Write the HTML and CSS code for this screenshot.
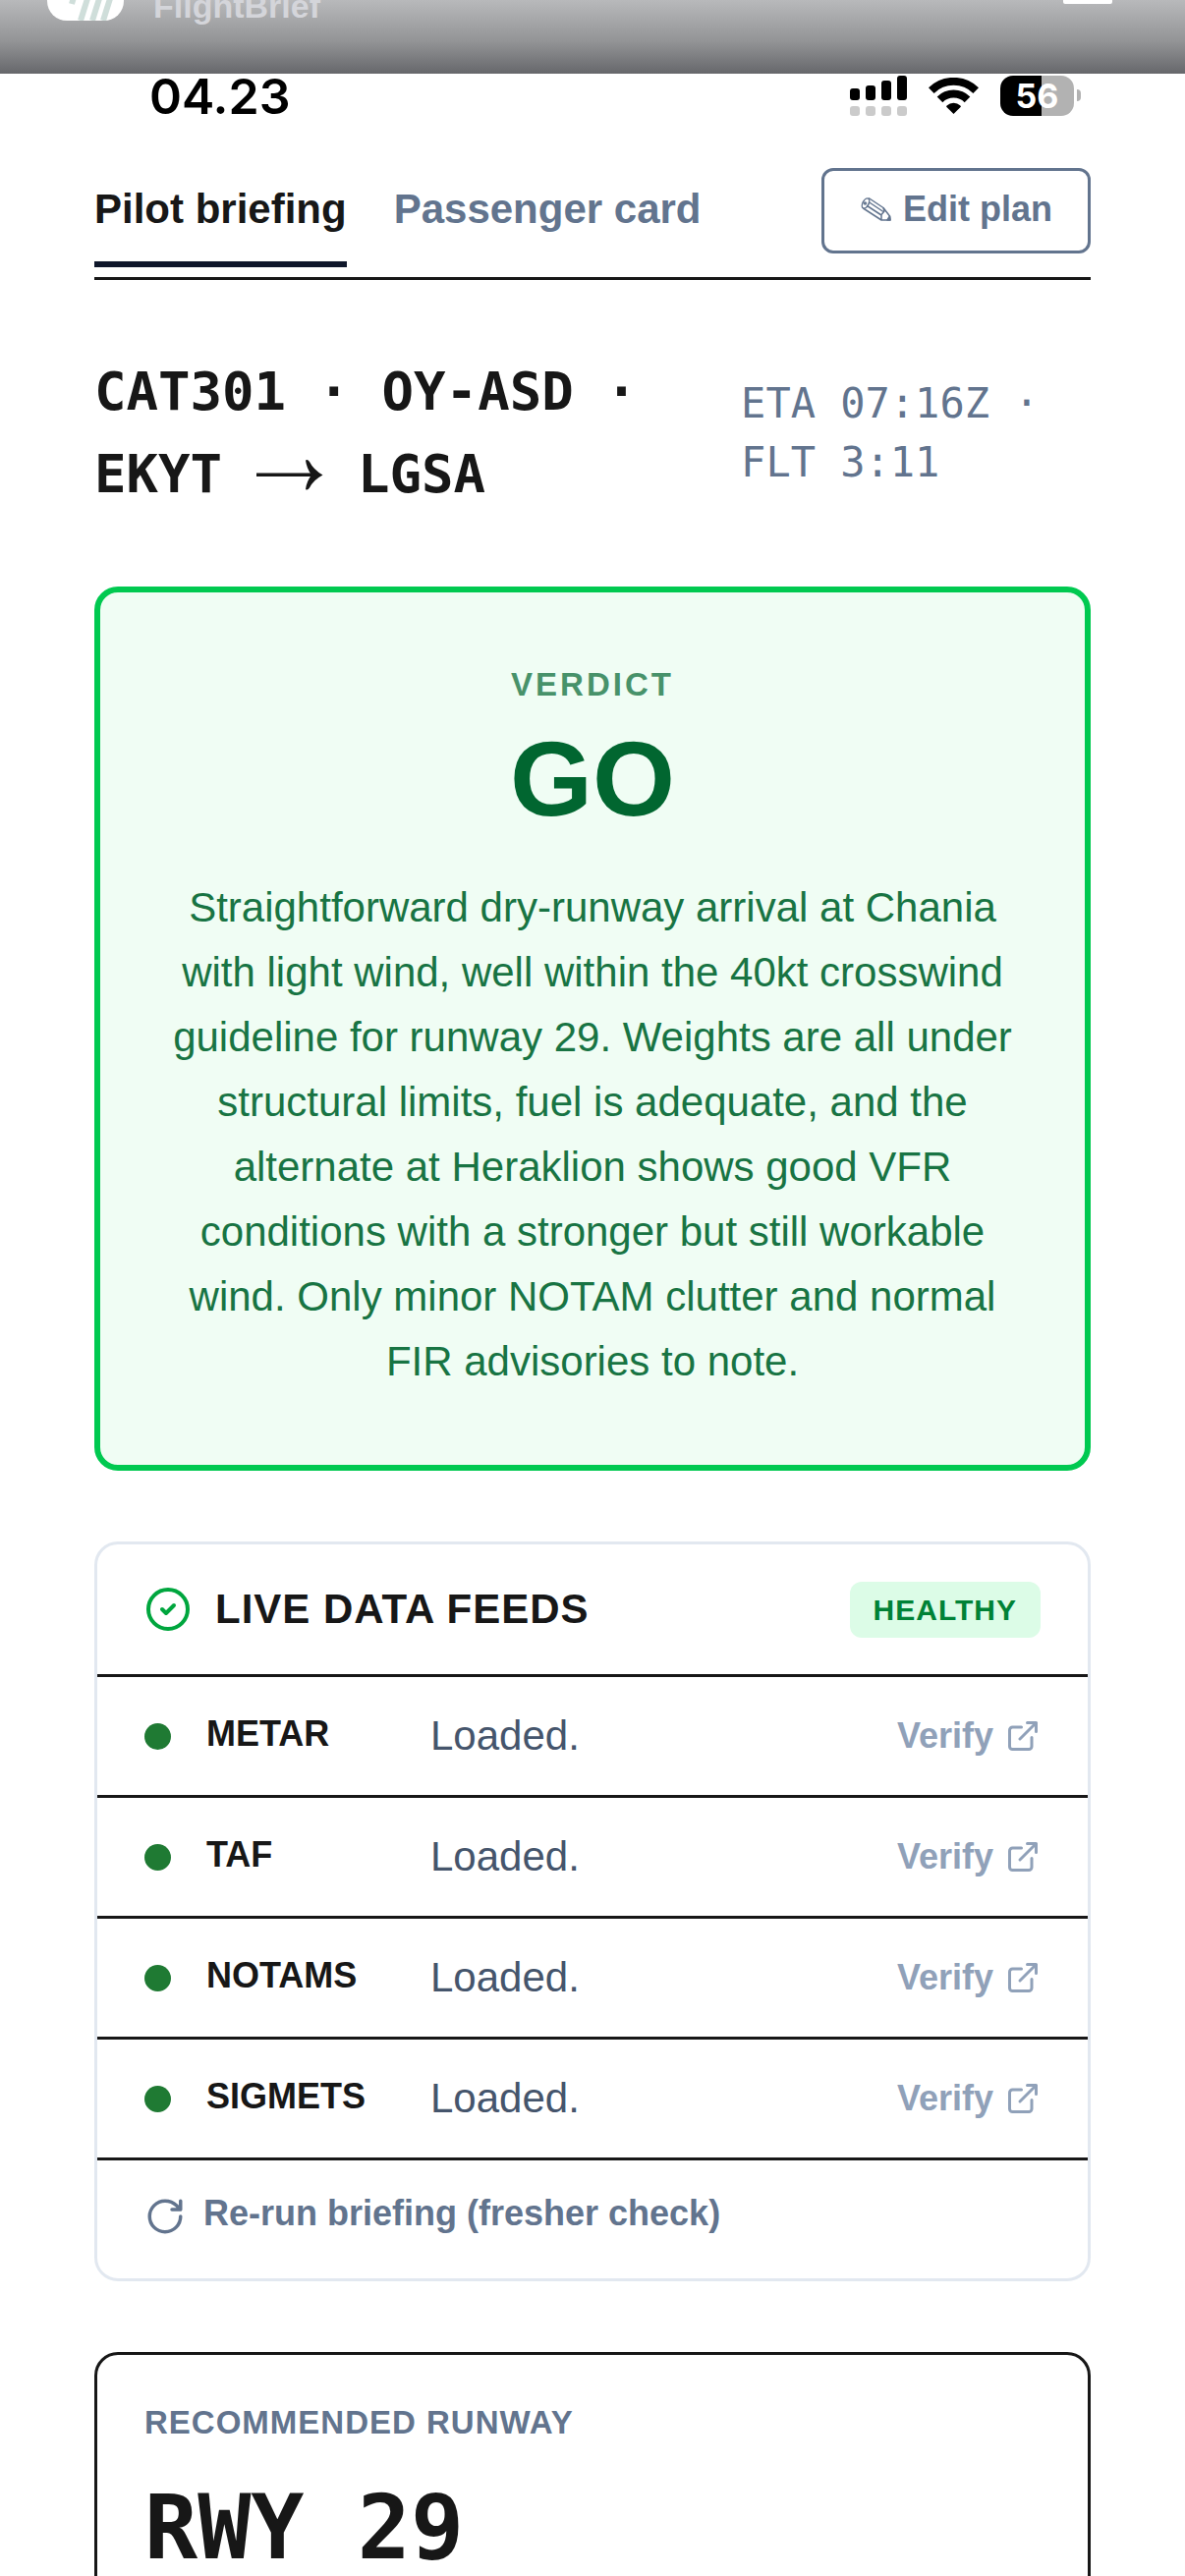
FILE: index.html
```html
<!DOCTYPE html>
<html lang="en">
<head>
<meta charset="utf-8">
<meta name="viewport" content="width=device-width, initial-scale=1">
<title>FlightBrief</title>
<link rel="stylesheet" href="styles.css">
</head>
<body>
<header class="app-bar">
  <svg class="logo" viewBox="0 0 78 78" aria-hidden="true">
    <rect width="78" height="78" rx="20" fill="#fff"/>
    <g fill="none" stroke="#cfdeda" stroke-width="6">
      <path d="M30 44 L25 61"/>
      <path d="M49 30 L34 78"/>
      <path d="M61 30 L46 78"/>
      <path d="M72 30 L57 78"/>
    </g>
  </svg>
  <span class="brand">FlightBrief</span>
  <button class="menu" aria-label="Menu"></button>
</header>
<div class="status">
  <span class="clock">04.23</span>
  <svg class="signal" viewBox="0 0 58 41" aria-hidden="true">
    <rect x="0" y="13" width="10" height="12" rx="3"/>
    <rect x="16" y="10" width="10" height="15" rx="3"/>
    <rect x="32" y="5" width="10" height="20" rx="3"/>
    <rect x="48" y="0" width="10" height="25" rx="3"/>
    <g fill="#cbcbcb">
      <rect x="0" y="31" width="10" height="10" rx="3"/>
      <rect x="16" y="31" width="10" height="10" rx="3"/>
      <rect x="32" y="31" width="10" height="10" rx="3"/>
      <rect x="48" y="31" width="10" height="10" rx="3"/>
    </g>
  </svg>
  <svg class="wifi" viewBox="0 0 51 37" aria-hidden="true">
    <g fill="none" stroke="#000" stroke-width="8">
      <path d="M2.800 13.100 A32.500 32.500 0 0 1 48.200 13.100"/>
      <path d="M11.500 22.300 A19.800 19.800 0 0 1 39.500 22.300"/>
    </g>
    <path d="M25.500 37 L18.200 29.700 Q18 29 18.600 28.400 A10.500 10.500 0 0 1 32.400 28.400 Q33 29 32.800 29.700 Z"/>
  </svg>
  <div class="battery"><span class="level">56</span></div>
</div>
<main class="page">
  <nav class="tabs">
    <a class="tab tab-active" href="#pilot">Pilot briefing</a>
    <a class="tab" href="#passenger">Passenger card</a>
    <button class="edit">
      <svg class="pencil" viewBox="0 0 34 30" aria-hidden="true">
        <g fill="none" stroke="currentColor" stroke-width="1.500" stroke-linejoin="round">
          <ellipse cx="6" cy="9" rx="3" ry="5.500" transform="rotate(28 6 9)"/>
          <circle cx="5.500" cy="9" r="1"/>
          <path d="M9 3.500 L24 13.500 L30.500 22 L31 26 L22 26 L3.500 14"/>
          <path d="M9 7.500 L24 17.500 M7.500 11.500 L22 21 M24 13.500 L25 17 L22 20.500 L22 26"/>
          <path d="M31 26 L30.500 22 L28 26 Z" fill="currentColor"/>
        </g>
      </svg>
      Edit plan
    </button>
  </nav>
  <section class="flight">
    <h1 class="route">CAT301 · OY-ASD · EKYT <svg class="arrow" viewBox="0 0 73 36" role="img" aria-label="to"><path d="M2 16.500h56v3.500H2z"/><path d="M52 3.500q2-1.500 4 1.500 4 8 13.500 13.500-9.500 5-13.500 13-2 3-4 1.500 1-8 6-14.500-5-7-6-15z"/></svg> LGSA</h1>
    <p class="times">ETA 07:16Z · FLT 3:11</p>
  </section>
  <section class="verdict">
    <h2 class="verdict-label">VERDICT</h2>
    <p class="verdict-value">GO</p>
    <p class="verdict-text">Straightforward dry-runway arrival at Chania with light wind, well within the 40kt crosswind guideline for runway 29. Weights are all under structural limits, fuel is adequate, and the alternate at Heraklion shows good VFR conditions with a stronger but still workable wind. Only minor NOTAM clutter and normal FIR advisories to note.</p>
  </section>
  <section class="card">
    <div class="feeds-head">
      <svg class="check" viewBox="0 0 24 24" aria-hidden="true"><circle cx="12" cy="12" r="10"/><path d="m9 12 2 2 4-4"/></svg>
      <h2 class="feeds-title">LIVE DATA FEEDS</h2>
      <span class="badge">HEALTHY</span>
    </div>
    <ul class="feeds">
      <li class="feed"><i class="dot"></i><b class="name">METAR</b><span class="state">Loaded.</span>
        <a class="verify" href="#metar">Verify <svg class="ext" viewBox="0 0 24 24" aria-hidden="true"><path d="M15 3h6v6M10 14 21 3M18 13v6a2 2 0 0 1-2 2H5a2 2 0 0 1-2-2V8a2 2 0 0 1 2-2h6"/></svg></a></li>
      <li class="feed"><i class="dot"></i><b class="name">TAF</b><span class="state">Loaded.</span>
        <a class="verify" href="#taf">Verify <svg class="ext" viewBox="0 0 24 24" aria-hidden="true"><path d="M15 3h6v6M10 14 21 3M18 13v6a2 2 0 0 1-2 2H5a2 2 0 0 1-2-2V8a2 2 0 0 1 2-2h6"/></svg></a></li>
      <li class="feed"><i class="dot"></i><b class="name">NOTAMS</b><span class="state">Loaded.</span>
        <a class="verify" href="#notams">Verify <svg class="ext" viewBox="0 0 24 24" aria-hidden="true"><path d="M15 3h6v6M10 14 21 3M18 13v6a2 2 0 0 1-2 2H5a2 2 0 0 1-2-2V8a2 2 0 0 1 2-2h6"/></svg></a></li>
      <li class="feed"><i class="dot"></i><b class="name">SIGMETS</b><span class="state">Loaded.</span>
        <a class="verify" href="#sigmets">Verify <svg class="ext" viewBox="0 0 24 24" aria-hidden="true"><path d="M15 3h6v6M10 14 21 3M18 13v6a2 2 0 0 1-2 2H5a2 2 0 0 1-2-2V8a2 2 0 0 1 2-2h6"/></svg></a></li>
    </ul>
    <button class="rerun">
      <svg class="reload" viewBox="0 0 24 24" aria-hidden="true"><path d="M21 12a9 9 0 1 1-9-9c2.520 0 4.930 1 6.740 2.740L21 8M21 3v5h-5"/></svg>
      Re-run briefing (fresher check)
    </button>
  </section>
  <section class="card card-dark">
    <h2 class="runway-label">RECOMMENDED RUNWAY</h2>
    <p class="runway">RWY 29</p>
  </section>
</main>
</body>
</html>
```

FILE: styles.css
```css
* {
  box-sizing: border-box;
}

body {
  margin: 0;
  height: 100vh;
  overflow: hidden;
  background: #fff;
  color: #171717;
  font-family: "Liberation Sans", Arial, sans-serif;
  font-size: 42px;
  line-height: 60px;
}

h1, h2, p, ul {
  margin: 0;
  padding: 0;
}

ul {
  list-style: none;
}

a {
  color: inherit;
  text-decoration: none;
}

button {
  margin: 0;
  border: 0;
  background: none;
  font: inherit;
  color: inherit;
}

svg {
  flex: none;
}

/* App bar, partly scrolled out of view */
.app-bar {
  display: flex;
  align-items: flex-end;
  gap: 30px;
  height: 75px;
  padding: 0 74px 48px 48px;
  overflow: hidden;
  background: linear-gradient(#b8b9bb, #939496 56%, #66676b);
}

.logo {
  width: 78px;
  height: 78px;
  margin-bottom: 6px;
}

.brand {
  color: #d4d5da;
  font-size: 34px;
  font-weight: 700;
  line-height: 42px;
}

.menu {
  width: 50px;
  height: 6px;
  margin: 0 0 23px auto;
  padding: 0;
  border-radius: 2px;
  background: #fff;
}

/* Status bar */
.status {
  display: flex;
  align-items: flex-start;
  height: 96px;
  padding: 2px 106px 0 152px;
}

.clock {
  margin-right: auto;
  color: #000;
  font-family: Inter, sans-serif;
  font-size: 50px;
  font-weight: 600;
  line-height: 42px;
}

.signal {
  width: 58px;
  height: 41px;
}

.wifi {
  width: 51px;
  height: 37px;
  margin: 2px 22px 0;
}

.battery {
  position: relative;
  width: 75px;
  height: 41px;
  margin-right: 7px;
  border-radius: 13px;
  background: linear-gradient(90deg, #000 56%, #b2b2b2 56%);
  color: #fff;
  text-align: center;
}

.battery::after {
  content: "";
  position: absolute;
  top: 14px;
  right: -7px;
  width: 4px;
  height: 12px;
  border-radius: 0 4px 4px 0;
  background: #b2b2b2;
}

.level {
  display: block;
  font-family: Inter, sans-serif;
  font-size: 34px;
  font-weight: 700;
  line-height: 41px;
}

.page {
  display: flex;
  flex-direction: column;
  gap: 72px;
  padding: 0 96px;
}

/* Tabs */
.tabs {
  display: flex;
  align-items: flex-start;
  gap: 48px;
  height: 114px;
  border-bottom: 3px solid #171717;
  color: #62748e;
  font-weight: 700;
}

.tab {
  height: 101px;
  padding-top: 12px;
  border-bottom: 6px solid transparent;
}

.tab-active {
  border-color: #0f172b;
  color: #171717;
}

.edit {
  display: flex;
  align-items: center;
  gap: 10px;
  height: 87px;
  margin-left: auto;
  padding: 0 36px 4px;
  border: 3px solid #62748e;
  border-radius: 12px;
  font-size: 36px;
}

.pencil {
  width: 34px;
  height: 30px;
}

/* Flight line */
.flight {
  display: grid;
  grid-template-columns: 12fr 7fr;
  align-items: center;
  gap: 48px;
  font-family: "DejaVu Sans Mono", monospace;
}

.route {
  font-size: 54px;
  line-height: 84px;
}

.arrow {
  width: 73px;
  height: 36px;
  fill: currentColor;
}

.times {
  color: #62748e;
}

/* Verdict */
.verdict {
  padding: 70px 60px 72px;
  border: 6px solid #00c950;
  border-radius: 24px;
  background: #f0fdf4;
  color: #016630;
  text-align: center;
}

.verdict-label {
  font-size: 33px;
  line-height: 48px;
  letter-spacing: 3px;
  opacity: .7;
}

.verdict-value {
  margin: 18px 0 44px;
  font-size: 108px;
  font-weight: 700;
  line-height: 108px;
}

.verdict-text {
  line-height: 66px;
  opacity: .9;
}

/* Cards */
.card {
  border: 3px solid #e2e8f0;
  border-radius: 24px;
}

.card-dark {
  padding: 45px 48px;
  border-color: #171717;
}

.feeds-head {
  display: flex;
  align-items: center;
  gap: 24px;
  padding: 36px 48px;
}

.check, .ext, .reload {
  fill: none;
  stroke: currentColor;
  stroke-width: 2;
  stroke-linecap: round;
  stroke-linejoin: round;
}

.check {
  width: 48px;
  height: 48px;
  color: #00a63e;
}

.feeds-title {
  font-size: 42px;
  letter-spacing: 1px;
}

.badge {
  margin-left: auto;
  padding: 6px 24px;
  border-radius: 12px;
  background: #dcfce7;
  color: #008236;
  font-size: 30px;
  font-weight: 700;
  line-height: 45px;
  letter-spacing: 1px;
}

.feed {
  display: flex;
  align-items: center;
  gap: 36px;
  padding: 30px 48px;
  border-top: 3px solid #171717;
}

.dot {
  width: 27px;
  height: 27px;
  border-radius: 50%;
  background: #1f7a33;
}

.name {
  width: 192px;
  padding-bottom: 4px;
  font-size: 36px;
  line-height: 56px;
}

.state {
  color: #45556c;
}

.verify {
  display: flex;
  align-items: center;
  gap: 12px;
  margin-left: auto;
  color: #90a1b9;
  font-size: 36px;
  font-weight: 700;
}

.ext {
  width: 36px;
  height: 36px;
}

.rerun {
  display: flex;
  align-items: flex-start;
  gap: 18px;
  width: 100%;
  padding: 36px 48px 42px;
  border-top: 3px solid #171717;
  color: #62748e;
  font-size: 36px;
  font-weight: 700;
  line-height: 36px;
}

.reload {
  width: 42px;
  height: 42px;
}

.runway-label {
  color: #62748e;
  font-size: 33px;
  line-height: 48px;
  letter-spacing: 1px;
}

.runway {
  margin-top: 38px;
  font-family: "DejaVu Sans Mono", monospace;
  font-size: 90px;
  font-weight: 700;
  line-height: 90px;
}
```
